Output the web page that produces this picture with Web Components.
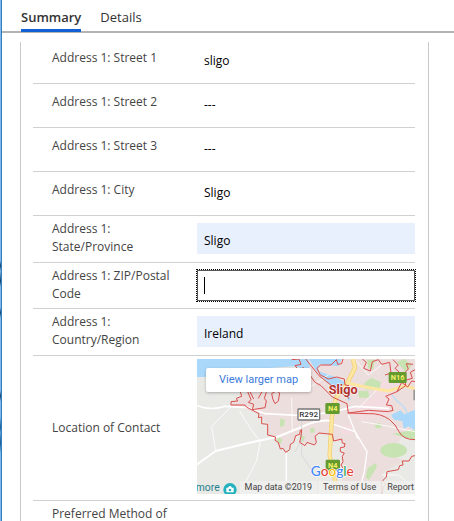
<!DOCTYPE html>
<html lang="en">
<head>
<meta charset="utf-8">
<title>Contact</title>
<style>
  body { margin: 0; background: #fff; font-family: "Open Sans", "Noto Sans", sans-serif; font-size: 12px; color: #444; }
</style>
</head>
<body>
<contact-form></contact-form>

<template id="contact-form">
  <style>
    :host { display: grid; grid-template-columns: 2px minmax(0, 1fr); height: 100vh; overflow: hidden; }
    .edge {
      border-right: 1px solid #2e80c0;
      background: linear-gradient(#7fb8e8 0 50%, #16406e 51%, #7fb8e8 52%, #16406e 54%, #7fb8e8 55% 59%, #16406e 60%, #7fb8e8 61% 75%, #16406e 76%, #7fb8e8 77% 80%, #1d5a92 82%, #5e9fd6 83%, #1d5a92 85%, #7fb8e8 87%);
    }
    .page { display: flex; flex-direction: column; min-height: 0; }
    nav { display: flex; gap: 19px; padding: 0 19px; border-bottom: 2px solid #b4b4b4; height: 31px; flex: none; }
    main { flex: 1; min-height: 0; overflow: hidden; margin: 9px 25px 0 18px; padding: 0 13px 0 12px; border: solid #c8c8c8; border-width: 0 1px; }
    .rows { margin-top: -2px; }
  </style>
  <div class="edge"></div>
  <div class="page">
    <nav>
      <form-tab selected>Summary</form-tab>
      <form-tab>Details</form-tab>
    </nav>
    <main>
      <div class="rows">
        <form-field label="Address 1: Street 1" value="sligo"></form-field>
        <form-field label="Address 1: Street 2" value="---"></form-field>
        <form-field label="Address 1: Street 3" value="---"></form-field>
        <form-field label="Address 1: City" value="Sligo"></form-field>
        <form-field label="Address 1: State/Province" value="Sligo" filled></form-field>
        <form-field label="Address 1: ZIP/Postal Code" value="" editing></form-field>
        <form-field label="Address 1: Country/Region" value="Ireland" filled></form-field>
        <form-row center>
          <span slot="label">Location of Contact</span>
          <location-map></location-map>
        </form-row>
        <form-row tall><span slot="label">Preferred Method of</span></form-row>
      </div>
    </main>
  </div>
</template>

<template id="form-tab">
  <style>
    :host { display: flex; }
    button { border: 0; border-bottom: 3px solid transparent; margin: 0 0 -1px; padding: 4px 0 0; background: none; font: 13px/20px "Open Sans", sans-serif; color: #333; }
    :host([selected]) button { font-weight: 600; border-color: #1160d4; }
  </style>
  <button type="button"><slot></slot></button>
</template>

<template id="form-row">
  <style>
    :host { display: grid; grid-template-columns: 144px minmax(0, 1fr); gap: 0 20px; align-items: start; border-bottom: 1px solid #d0d0d0; min-height: 43px; }
    .label { display: block; padding: 9px 0 0 19px; line-height: 18px; }
    .value { padding: 3px 0; min-width: 0; }
    :host([tall]) .label { padding-top: 4px; }
    :host([center]) { align-items: center; }
    :host([center]) .label { padding-top: 0; }
    :host([center]) .value { padding: 3px 0 6px; }
  </style>
  <div class="label"><slot name="label"></slot></div>
  <div class="value"><slot></slot></div>
</template>

<template id="form-field">
  <style>
    :host { display: block; }
    form-row[tall] { min-height: 46px; }
    :host([editing]) form-row { min-height: 45px; }
    input { display: block; box-sizing: border-box; width: 100%; height: 31px; margin: 0; padding: 3px 7px 0; border: 0; outline: 0; border-radius: 0; background: transparent; font: 500 12px/18px "Open Sans", sans-serif; color: #000; }
    .filled { background: #e8f0fe; margin-top: 4px; }
    .editing { margin-top: 4px; border: 1px solid #555; outline: 1px dotted #000; background: linear-gradient(#000, #000) 6px 6px / 1px 17px no-repeat #fff; }
  </style>
  <form-row><label slot="label" for="field"></label><input id="field" type="text"></form-row>
</template>

<template id="location-map">
  <style>
    :host { display: block; position: relative; overflow: hidden; height: 135px; font-family: Roboto, sans-serif; }
    svg { display: block; width: 100%; height: 100%; }
    a { color: inherit; text-decoration: none; }
    .larger { position: absolute; left: 9px; top: 9px; padding: 0 13px; border-radius: 2px; background: #fff; box-shadow: 0 1px 3px #0004; color: #3b7bdb; font-size: 11px; line-height: 24px; }
    .credits { position: absolute; right: 0; bottom: 0; display: flex; gap: 1px; color: #444; font-size: 9px; line-height: 13px; white-space: nowrap; }
    .credits > * { background: #f0f0eedd; padding: 0 5px; }
    .credits > :last-child { padding-right: 1px; }
    .place { fill: #b3312b; stroke: #fff; stroke-width: 3px; paint-order: stroke; font: 700 38px Roboto, sans-serif; }
    .road { font: 700 22px Roboto, sans-serif; fill: #f4f06a; text-anchor: middle; }
    .regional { font: 500 24px Roboto, sans-serif; fill: #333; text-anchor: middle; }
    .poi { font: 400 31px Roboto, sans-serif; fill: #257f8d; }
    .logo { font: 500 41px Lato, sans-serif; stroke: #fff; stroke-width: 4px; paint-order: stroke; }
  </style>
  <svg viewBox="6 12 654 405" preserveAspectRatio="xMidYMid slice" role="img" aria-label="Map of Sligo">
    <path fill="#e9e9e6" d="M0 0H670V430H0z"/>
    <path fill="#ecdedd" d="M300 12H660V252L620 245L590 300L660 330V300L566 352L562 417H455L430 417L436 300L412 236L366 236L364 268L314 262L316 226L290 262L272 291L244 266L240 246L218 240V208L190 176L108 148L128 130L170 106L225 100L340 100L345 60z"/>
    <path fill="#e9e9e6" d="M318 262L364 270L366 236L412 236L416 258H442L448 292L442 330L440 417H270L272 291z M562 417L566 374L575 350L612 343L625 318L660 302V417z"/>
    <g fill="#f2dcdf"><path d="M555 85l50-20 14 30-40 60-60-10zM456 170l60-34 70 14v30l-90 16zM380 14h30v24h-30zM440 210h30v30h-30z"/></g>
    <path fill="#a9d8fb" d="M6 12H340L346 48L300 34L210 40L174 66H6z M342 12H440L430 34L372 28L368 48L420 66L462 88L452 118L400 84L362 46z"/>
    <path fill="#a9d8fb" d="M588 180L616 166L628 178L660 164V226L640 214L626 222L622 198L598 194z"/>
    <path fill="none" stroke="#a9d8fb" stroke-width="8" d="M400 76L448 98L464 136"/>
    <path fill="none" stroke="#b9dff5" stroke-width="4" d="M590 118q10 16 26 28t20 28"/>
    <g fill="#c7e3b2">
      <ellipse cx="596" cy="286" rx="40" ry="22"/><path d="M508 84l20-16 30 14-4 20-42 2zM490 108l30 0 2 20-30 0zM516 14h24l-6 30-14-4zM606 20l24-8 20 20-18 20zM256 190l14 6-4 18-12 2zM248 244l14 10-4 12-12-4zM518 340l24-16 4 12-24 38-10-6zM540 208l16-4 4 14-18 2zM345 220l12-2 2 14-12 2zM316 238l14 8-4 14-12-8zM244 72h20v20h-20zM592 236l68-12v30l-30-6z"/>
    </g>
    <g fill="none" stroke="#fff" stroke-linecap="round">
      <path stroke-width="6" d="M6 328Q40 304 62 288L160 264L246 246L320 216Q370 192 410 198"/>
      <path stroke-width="5" d="M6 152Q50 168 90 154L160 158L210 176L320 182L410 172L480 154L580 160"/>
      <path stroke-width="4" d="M274 294V384M416 208L480 230L516 290L508 350L490 417M460 180L488 250"/>
      <path stroke-width="3" d="M106 158L50 214L62 288M134 168Q170 230 196 260L184 320L150 384M290 130L292 230M660 230L560 210L500 200M480 14L520 60L560 30M400 60L340 100M560 360L610 360L640 384M490 160L550 100L590 110" opacity=".8"/>
      <path stroke="#d9d9d9" stroke-width="3" d="M320 192V300L360 360M316 262L300 290"/>
    </g>
    <g fill="none" stroke-linejoin="round">
      <path stroke="#f1cf72" stroke-width="13" d="M474 12L480 38L456 86L424 126L412 172L408 230L404 300L416 360L430 417"/>
      <path stroke="#fce6a0" stroke-width="9" d="M474 12L480 38L456 86L424 126L412 172L408 230L404 300L416 360L430 417M456 84L510 96L580 108L632 92L660 102"/>
    </g>
    <g fill="none" stroke="#d94f4c" stroke-width="3" stroke-linejoin="round">
      <path d="M290 14L312 12L318 28L300 32L310 44L326 38L342 56L360 82L378 92L412 126L456 146L460 174L520 166L580 170L594 166L590 152L574 150L582 132L572 124L606 110L620 82L638 96L650 78L660 80"/>
      <path d="M332 12L372 62L430 108L462 130M444 12L440 26L428 28L424 14L408 30L376 30L366 40L376 60L400 72L424 66L448 72L450 90L462 92"/>
      <path d="M502 12L514 22L506 40L526 48L532 20L550 14L560 28L584 22L588 54L570 60M594 14L610 30L600 40L622 60L640 42L634 26L654 28M606 110L632 92L630 76L652 70L646 52L660 44"/>
      <path d="M458 174L520 176Q556 174 584 194Q602 208 612 230Q624 254 660 254"/>
      <path d="M136 110L140 124L124 130L128 138L108 140L108 150L150 150L154 156L192 176L190 188L200 186L200 206L218 208V240L242 246L240 256L250 262L256 282L264 280L272 292L284 284L286 268L296 262L302 242L314 238L316 226L320 224L318 244L314 262L330 272L336 262L358 270L364 262L360 244L372 234L412 238L416 258L440 252L442 264L450 266L448 276L436 278L436 290L448 294L442 304L444 320L438 330L446 342"/>
      <path d="M158 110L168 134L160 142L176 148L172 164L210 158L214 138L208 130L214 112M164 108L176 132M202 108L190 130M240 110L230 116L234 134L240 146L250 138L254 114L248 110"/>
      <path d="M562 417L564 396L572 390L564 376L574 366L576 350L610 344L614 332L624 330L622 318L642 318L650 304L660 302M440 396L450 408L478 402L496 417"/>
    </g>
    <path fill="#999" d="M655 104h8v32h-8z"/>
    <g fill="#659b2e"><rect x="391" y="144" width="43" height="33" rx="4"/><rect x="581" y="51" width="54" height="33" rx="4"/><rect x="392" y="314" width="43" height="33" rx="4"/></g>
    <g class="road"><text x="413" y="168">N4</text><text x="608" y="75">N16</text><text x="413" y="338">N4</text></g>
    <rect x="309" y="162" width="65" height="33" rx="2" fill="#fff" stroke="#777" stroke-width="4"/>
    <text class="regional" x="341" y="187">R292</text>
    <text class="place" x="401" y="118">Sligo</text>
    <text class="logo" x="347" y="363"><tspan fill="#4285f4">G</tspan><tspan fill="#ea4335">o</tspan><tspan fill="#fbbc05">o</tspan><tspan fill="#4285f4">g</tspan><tspan fill="#34a853">l</tspan><tspan fill="#ea4335">e</tspan></text>
    <text class="poi" x="74" y="408" text-anchor="end">more</text>
    <circle cx="105" cy="404" r="20" fill="#23b1bd"/>
    <path fill="#fff" d="M94 398h5l3-4h6l3 4h5v14H94z"/><circle cx="105" cy="405" r="4" fill="#23b1bd"/>
  </svg>
  <a class="larger" href="#map">View larger map</a>
  <div class="credits"><span>Map data ©2019</span><a href="#terms">Terms of Use</a><a href="#report">Report</a></div>
</template>

<script>
  class TemplateElement extends HTMLElement {
    constructor() {
      super();
      const template = document.getElementById(this.localName);
      this.attachShadow({ mode: "open" }).append(template.content.cloneNode(true));
    }
  }
  class FormTab extends TemplateElement {}
  class FormRow extends TemplateElement {}
  class LocationMap extends TemplateElement {}
  class ContactForm extends TemplateElement {}
  class FormField extends TemplateElement {
    connectedCallback() {
      const input = this.shadowRoot.querySelector("input");
      this.shadowRoot.querySelector("label").textContent = this.getAttribute("label");
      input.value = this.getAttribute("value");
      for (const state of ["filled", "editing"]) {
        if (this.hasAttribute(state)) {
          input.classList.add(state);
          this.shadowRoot.querySelector("form-row").setAttribute("tall", "");
        }
      }
    }
  }
  customElements.define("form-tab", FormTab);
  customElements.define("form-row", FormRow);
  customElements.define("form-field", FormField);
  customElements.define("location-map", LocationMap);
  customElements.define("contact-form", ContactForm);
</script>
</body>
</html>
